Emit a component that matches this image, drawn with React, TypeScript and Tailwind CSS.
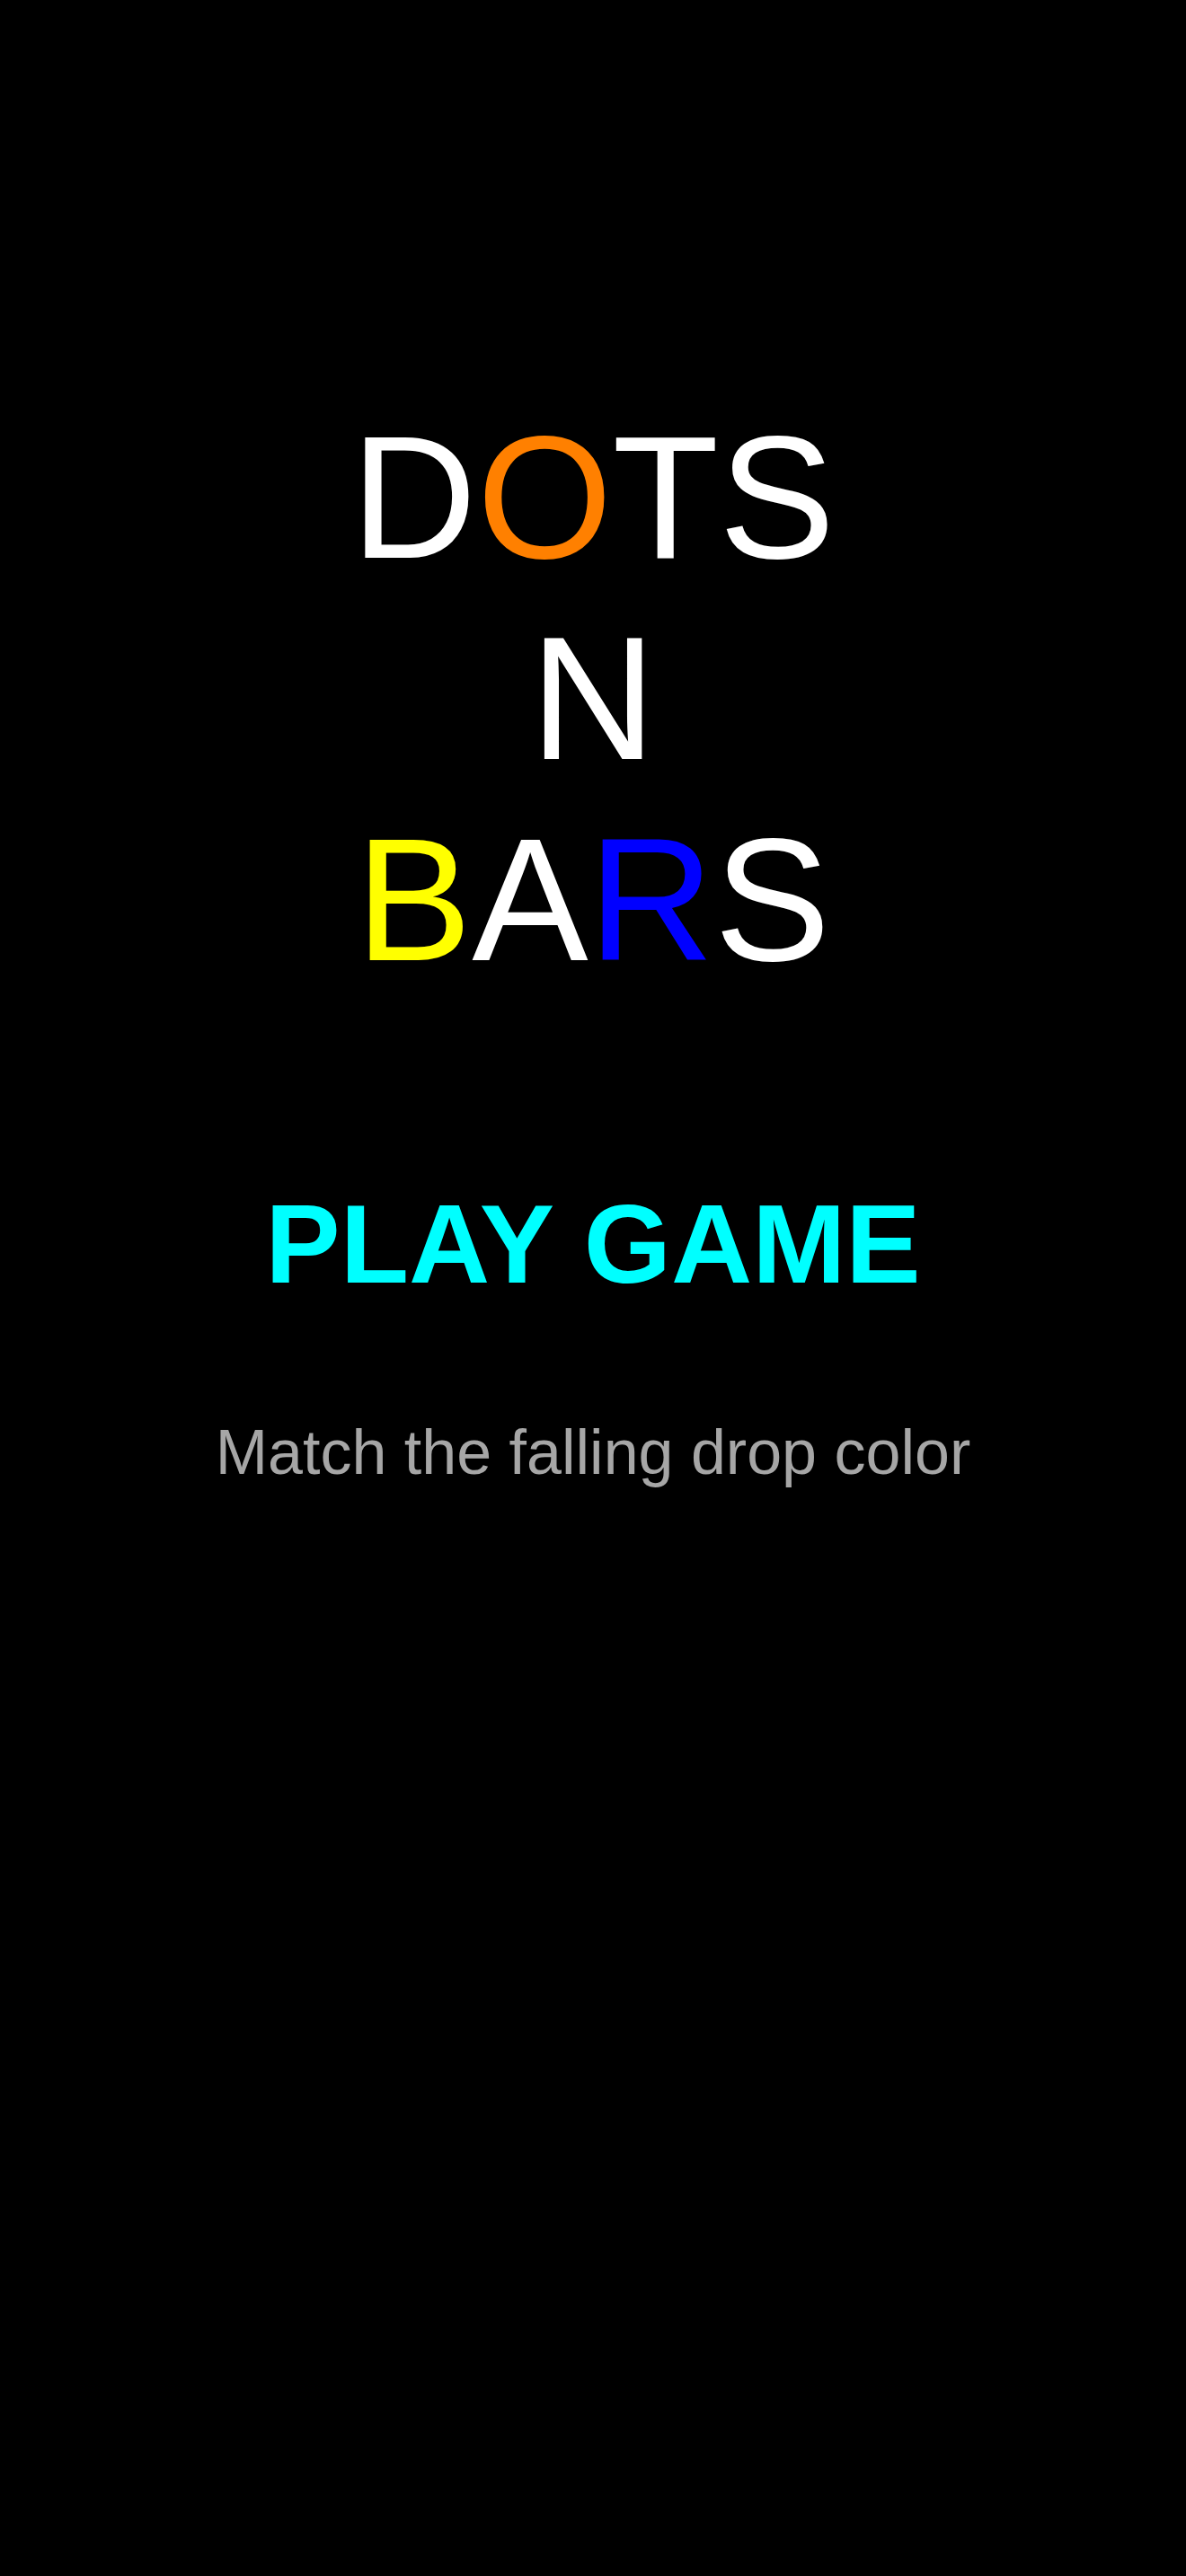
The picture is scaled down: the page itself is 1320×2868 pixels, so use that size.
export default function App() {
  return (
    <div
      className="min-h-screen w-full bg-black flex flex-col items-center pt-[442px]"
      style={{ fontFamily: '"Liberation Sans", Arial, sans-serif' }}
    >
      <h1 className="flex flex-col items-center text-[194px] leading-[224px] font-normal text-white">
        <span>
          D<span className="text-[#ff8000]">O</span>TS
        </span>
        <span>N</span>
        <span>
          <span className="text-[#ffff00]">B</span>A<span className="text-[#0000ff]">R</span>S
        </span>
      </h1>
      <button className="mt-[199px] text-[125px] leading-[144px] font-bold text-[#00ffff]">
        PLAY GAME
      </button>
      <p className="mt-[120px] text-[70px] leading-[80px] text-[#a6a6a6]">
        Match the falling drop color
      </p>
    </div>
  );
}
